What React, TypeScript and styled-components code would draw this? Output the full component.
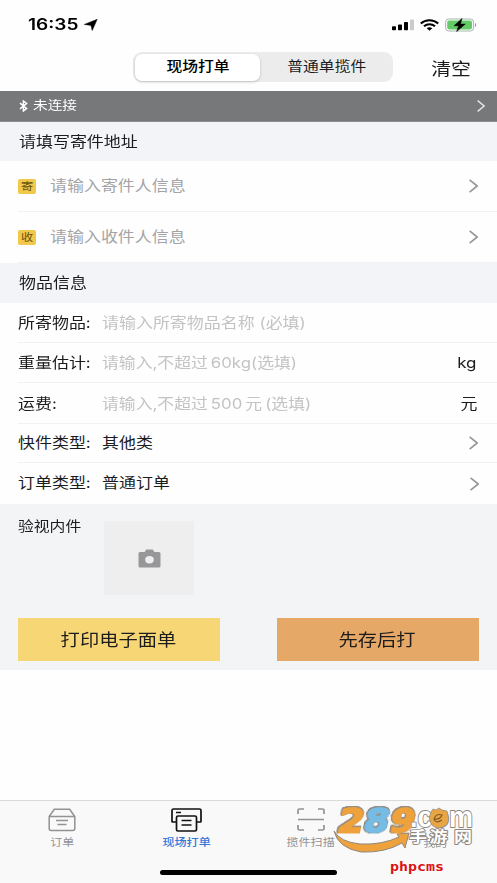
import React from "react";
import styled, { createGlobalStyle } from "styled-components";

const GlobalStyle = createGlobalStyle`
  * { box-sizing: border-box; }
  body { margin: 0; background: #fefefe; font-family: Inter, "Noto Sans CJK SC", sans-serif; color: #1c1c1e; }
`;

const Screen = styled.div`
  position: relative;
  width: 497px;
  height: 883px;
  display: flex;
  flex-direction: column;
  background: #fefefe;
  overflow: hidden;
`;

/* Wide lettering: glyphs are drawn broader than they are tall. */
const Wide = styled.span<{ $size?: number; $color?: string; $weight?: number; $origin?: string; $scale?: number; $dy?: number }>`
  display: inline-block;
  white-space: pre;
  line-height: 20px;
  font-size: ${(p) => p.$size ?? 14.5}px;
  color: ${(p) => p.$color ?? "#1c1c1e"};
  font-weight: ${(p) => p.$weight ?? 400};
  transform: translateY(${(p) => p.$dy ?? 0}px) scaleX(${(p) => p.$scale ?? 1.17});
  transform-origin: ${(p) => p.$origin ?? "left"} center;
`;

const StatusBar = styled.header`
  height: 48px;
  display: flex;
  justify-content: space-between;
  padding: 15px 20px 0 28px;
`;
const StatusGroup = styled.div<{ $gap: number }>`
  display: flex;
  align-items: center;
  height: 19px;
  gap: ${(p) => p.$gap}px;
`;
const Clock = styled.span`
  width: 51px;
  font: 600 15.5px/19px Inter, sans-serif;
  white-space: nowrap;
  color: #000;
  span { display: inline-block; transform: scaleX(1.23); transform-origin: left; }
`;

const NavBar = styled.nav`
  height: 43px;
  display: flex;
  padding: 4px 26px 0 133px;
  justify-content: space-between;
`;
const Segments = styled.div`
  width: 260px;
  height: 30px;
  display: grid;
  grid-template-columns: 125px 1fr;
  padding: 1.5px 0 1.5px 2px;
  border-radius: 9px;
  background: #ececed;
`;
const Segment = styled.button<{ $active?: boolean }>`
  border: 0;
  padding: 0;
  display: flex;
  align-items: center;
  justify-content: center;
  font-family: inherit;
  border-radius: 7px;
  background: ${(p) => (p.$active ? "#fff" : "transparent")};
  box-shadow: ${(p) => (p.$active ? "0 1px 3px rgba(0,0,0,.2)" : "none")};
`;
const Clear = styled.div`
  padding-top: 7px;
`;

const DeviceBar = styled.div`
  height: 31px;
  display: flex;
  align-items: center;
  padding: 0 12px 0 19px;
  background: #77787a;
  border-bottom: 1px solid #8b8c8d;
`;
const DeviceName = styled.div`
  flex: 1;
  margin-left: 5px;
  display: flex;
`;

const SectionTitle = styled.h2<{ $h: number }>`
  margin: 0;
  height: ${(p) => p.$h}px;
  display: flex;
  align-items: center;
  padding-left: 18.5px;
  background: #f2f4f7;
  font-weight: 400;
`;

const Row = styled.div<{ $h: number; $last?: boolean }>`
  height: ${(p) => p.$h}px;
  margin-left: 18px;
  padding-right: ${(p) => (p.$last ? 18 : 19)}px;
  display: flex;
  align-items: center;
  border-bottom: ${(p) => (p.$last ? "0" : "1px solid #f1f2f3")};
`;
const Tag = styled.span`
  width: 18px;
  height: 15px;
  margin-right: 14px;
  border-radius: 2px;
  background: #f2c84b;
  display: flex;
  align-items: center;
  justify-content: center;
`;
const Label = styled.div`
  width: 84px;
`;
const Value = styled.div`
  flex: 1;
`;
const Unit = styled.div`
  margin-right: 1px;
`;

const Inspect = styled.section`
  height: 114px;
  display: flex;
  padding: 17px 0 0 18px;
  background: #f2f4f6;
`;
const InspectLabel = styled.div`
  width: 86px;
  margin-top: -6px;
`;
const PhotoBox = styled.div`
  width: 90px;
  height: 74px;
  display: flex;
  align-items: center;
  justify-content: center;
  background: #eeeeee;
`;

const Actions = styled.div`
  height: 52px;
  display: flex;
  justify-content: space-between;
  padding: 0 18px 9px;
  background: #f2f4f6;
`;
const Action = styled.button<{ $bg: string }>`
  width: 202px;
  border: 0;
  padding: 0 2px 0 0;
  font-family: inherit;
  background: ${(p) => p.$bg};
`;

const Spacer = styled.div`
  flex: 1;
`;
const TabBar = styled.footer`
  height: 83px;
  display: flex;
  flex-direction: column;
  align-items: center;
  background: #f9f9fa;
  border-top: 1px solid #dadadb;
`;
const Tabs = styled.div`
  width: 100%;
  height: 69px;
  display: grid;
  grid-template-columns: repeat(4, 124.4px);
`;
const Tab = styled.div`
  display: flex;
  flex-direction: column;
  align-items: center;
  padding-top: 5.5px;
`;
const TabIcon = styled.div`
  height: 26px;
  display: flex;
  align-items: center;
`;
const HomeBar = styled.div`
  width: 177px;
  height: 5px;
  border-radius: 3px;
  background: #000;
`;

const Watermark = styled.div`
  position: absolute;
  left: 330px;
  top: 800px;
  width: 150px;
  height: 80px;
  svg { display: block; }
`;
const Digit = styled.text`
  font: 700 33px "DejaVu Sans", sans-serif;
  stroke-width: 2px;
  stroke-linejoin: round;
  filter: drop-shadow(0.6px 0 0 #8d8780) drop-shadow(-0.6px 0 0 #8d8780) drop-shadow(0 0.6px 0 #8d8780) drop-shadow(0 -0.6px 0 #8d8780);
`;

const Chevron = ({ color = "#98989a", w = 9, h = 14 }: { color?: string; w?: number; h?: number }) => (
  <svg width={w} height={h} viewBox="0 0 9 14" fill="none" stroke={color} strokeWidth="1.7">
    <path d="M.6 .8 8.2 7 .6 13.2" />
  </svg>
);

const Arrow = () => (
  <svg width="14" height="12" viewBox="0 0 14 12">
    <path d="M13.2.3 8.2 11.5 7 6.4.3 5.4Z" fill="#000" stroke="#000" strokeWidth=".5" />
  </svg>
);
const Signal = () => (
  <svg width="22" height="12" viewBox="0 0 22 12">
    <rect x="0" y="7.3" width="4" height="4" rx=".8" />
    <rect x="6" y="5.5" width="4" height="5.8" rx=".8" />
    <rect x="12" y="3" width="4" height="8.3" rx=".8" />
    <rect x="18" y=".5" width="4" height="10.8" rx=".8" fill="#cbcbcc" />
  </svg>
);
const Wifi = () => (
  <svg width="19" height="12" viewBox="0 0 19 12" fill="none" stroke="#000" strokeWidth="2.1">
    <path d="M.8 4.5C5.6.1 13.4.1 18.2 4.5M4 7.3c3.2-2.8 7.8-2.8 11 0" />
    <path d="M6.7 9.2c1.7-1.2 3.9-1.2 5.6 0L9.5 11.7Z" fill="#000" stroke="none" />
  </svg>
);
const Battery = () => (
  <svg width="32" height="14" viewBox="0 0 32 14">
    <rect x=".6" y="1" width="28" height="12" rx="3.2" fill="#fff" stroke="#a2b8a4" />
    <rect x="2.2" y="2.6" width="24.8" height="8.8" rx="1.8" fill="#65cb69" />
    <path d="M30 5v4c1.6-.6 1.6-3.4 0-4Z" fill="#999" />
    <path d="M17 .4 9 7.8h4.6l-2 5.8 8.7-7.5h-4.8Z" fill="#000" stroke="#000" strokeWidth=".5" />
  </svg>
);
const Bluetooth = () => (
  <svg width="9" height="12" viewBox="0 0 9 12" fill="none" stroke="#fff" strokeWidth="1.5">
    <path d="m1 3.2 6.6 5.2L4.4 11V1l3.2 2.5L1 8.8" />
  </svg>
);
const Camera = () => (
  <svg width="23" height="19" viewBox="0 0 23 19">
    <path d="M2 3h4.6L8.3.5h6.4L16.4 3H21q1.5 0 1.5 1.5v12.5Q22.5 18.5 21 18.5H2Q.5 18.5.5 17V4.5Q.5 3 2 3Z" fill="#97979a" />
    <ellipse cx="11.5" cy="10.8" rx="4.3" ry="3.7" fill="#eee" />
  </svg>
);
const BoxIcon = () => (
  <svg width="28" height="24" viewBox="0 0 28 24" fill="none" stroke="#929294" strokeWidth="1.5">
    <path d="M1.2 8.5 6.3 1.2h15.4l5.1 7.3v12q0 2-2 2H3.2q-2 0-2-2ZM1.2 8.5h25.6M8 12.5h12M9.5 16.5h9" />
  </svg>
);
const PrinterIcon = () => (
  <svg width="31" height="24" viewBox="0 0 31 24" fill="none" stroke="#111" strokeWidth="1.7">
    <path d="M5 14H1.5q-.5 0-.5-.5V2.5Q1 1 2.500 1h26Q30 1 30 2.500v11q0 .5-.5.5H26M5 4.500h5" />
    <rect x="5.500" y="8" width="20" height="15" rx="1.500" />
    <path d="M10.500 12.500h10M10.500 17h10" />
  </svg>
);
const ScanIcon = () => (
  <svg width="28" height="23" viewBox="0 0 28 23" fill="none" stroke="#929294" strokeWidth="1.700">
    <path d="M1 6V2.500Q1 1 2.500 1H7M21 1h4.500Q27 1 27 2.500V6M27 17v3.500q0 1.500-1.500 1.500H21M7 22H2.500Q1 22 1 20.500V17M1 11.500h26" />
  </svg>
);

const fields = [
  { label: "所寄物品:", hint: "请输入所寄物品名称 (必填)", h: 40 },
  { label: "重量估计:", hint: "请输入,不超过\u200960kg(选填)", unit: "kg", h: 40 },
  { label: "运费:", hint: "请输入,不超过\u2009500\u2009元\u2009(选填)", unit: "元", h: 41 },
  { label: "快件类型:", value: "其他类", h: 39 },
  { label: "订单类型:", value: "普通订单", h: 41 },
];

export default function App() {
  return (
    <>
      <GlobalStyle />
      <Screen>
        <StatusBar>
          <StatusGroup $gap={5}>
            <Clock><span>16:35</span></Clock>
            <Arrow />
          </StatusGroup>
          <StatusGroup $gap={6}>
            <Signal />
            <Wifi />
            <Battery />
          </StatusGroup>
        </StatusBar>
        <NavBar>
          <Segments>
            <Segment $active><Wide $size={13.5} $weight={500} $origin="center" $color="#000" $dy={-1}>现场打单</Wide></Segment>
            <Segment><Wide $size={13.5} $origin="center" $dy={-1}>普通单揽件</Wide></Segment>
          </Segments>
          <Clear><Wide $size={17} $origin="right">清空</Wide></Clear>
        </NavBar>
        <DeviceBar>
          <Bluetooth />
          <DeviceName><Wide $size={12.5} $color="#fff">未连接</Wide></DeviceName>
          <Chevron color="#e6e6e6" w={8} h={12} />
        </DeviceBar>
        <SectionTitle $h={39}><Wide>请填写寄件地址</Wide></SectionTitle>
        <Row $h={51}>
          <Tag><Wide $size={10.5} $origin="center" $color="#66510f" $dy={1}>寄</Wide></Tag>
          <Value><Wide $color="#a4a4a6" $dy={-1}>请输入寄件人信息</Wide></Value>
          <Chevron />
        </Row>
        <Row $h={51}>
          <Tag><Wide $size={10.5} $origin="center" $color="#66510f" $dy={1}>收</Wide></Tag>
          <Value><Wide $color="#a4a4a6" $dy={-1}>请输入收件人信息</Wide></Value>
          <Chevron />
        </Row>
        <SectionTitle $h={40}><Wide>物品信息</Wide></SectionTitle>
        {fields.map((f, i) => (
          <Row key={f.label} $h={f.h} $last={i === 4}>
            <Label><Wide $dy={i >= 3 ? -1 : 0}>{f.label}</Wide></Label>
            <Value>
              <Wide $color={f.hint ? "#c3c3c5" : undefined} $scale={f.unit ? 1.16 : 1.17} $dy={i >= 3 ? -1 : 0}>
                {f.hint ?? f.value}
              </Wide>
            </Value>
            {f.unit ? <Unit><Wide $origin="right">{f.unit}</Wide></Unit> : f.value ? <Chevron /> : null}
          </Row>
        ))}
        <Inspect>
          <InspectLabel><Wide $size={13.5}>验视内件</Wide></InspectLabel>
          <PhotoBox><Camera /></PhotoBox>
        </Inspect>
        <Actions>
          <Action $bg="#f7d676"><Wide $size={16.5} $origin="center">打印电子面单</Wide></Action>
          <Action $bg="#e6a866"><Wide $size={16.5} $origin="center">先存后打</Wide></Action>
        </Actions>
        <Spacer />
        <TabBar>
          <Tabs>
            <Tab><TabIcon><BoxIcon /></TabIcon><Wide $size={10.3} $origin="center" $color="#929294" $dy={-1}>订单</Wide></Tab>
            <Tab><TabIcon><PrinterIcon /></TabIcon><Wide $size={10.3} $origin="center" $color="#3478d8" $weight={500} $dy={-1}>现场打单</Wide></Tab>
            <Tab><TabIcon><ScanIcon /></TabIcon><Wide $size={10.3} $origin="center" $color="#929294" $dy={-1}>揽件扫描</Wide></Tab>
            <Tab><TabIcon /><Wide $size={10.3} $origin="center" $color="#929294">我的</Wide></Tab>
          </Tabs>
          <HomeBar />
        </TabBar>
        <Watermark>
          <svg width="150" height="80" viewBox="0 0 150 80">
            <path d="M4 31q6 11 26 13 22 1 39-7l-2-3 12-1-4 15-3-5q-17 10-41 9Q8 48 4 31Z" fill="#efa23c" stroke="#8d8780" />
            <g transform="translate(6 32.500) skewX(-12)">
              <Digit x="0" y="0" textLength="26" lengthAdjust="spacingAndGlyphs" fill="#efa23c" stroke="#efa23c">2</Digit>
              <Digit x="52" y="0" textLength="25" lengthAdjust="spacingAndGlyphs" fill="#efa23c" stroke="#efa23c">9</Digit>
              <Digit x="26" y="0" textLength="25" lengthAdjust="spacingAndGlyphs" fill="#76bce4" stroke="#76bce4">8</Digit>
            </g>
            <g fill="#fff" stroke="#8d8780" strokeWidth="1.800" strokeLinejoin="round" paintOrder="stroke">
              <text x="80" y="27" fontFamily="Liberation Sans, sans-serif" fontWeight="700" fontSize="29" textLength="63" lengthAdjust="spacingAndGlyphs">.com</text>
              <g transform="translate(79 41.500) scale(1.200 1)">
                <text x="0 17 37.500" y="0" fontFamily="Noto Sans CJK SC, sans-serif" fontWeight="700" fontSize="15">手游网</text>
              </g>
            </g>
            <path d="M101 12l2-3 3 1 3-2 3 2 5 1 1 4q2 7-3 11-7 4-12 0-6-6-2-14Z" fill="#e8a544" stroke="#8d8780" strokeWidth=".7" />
            <path d="M104 19q6 1 8-4-6-2-8 4 1 5 8 1" fill="none" stroke="#805a25" strokeWidth="1.200" />
            <text x="60" y="70.500" fontFamily="DejaVu Sans Mono, monospace" fontWeight="700" fontSize="13" textLength="54" lengthAdjust="spacingAndGlyphs" fill="#dc0f14">phpcms</text>
          </svg>
        </Watermark>
      </Screen>
    </>
  );
}
